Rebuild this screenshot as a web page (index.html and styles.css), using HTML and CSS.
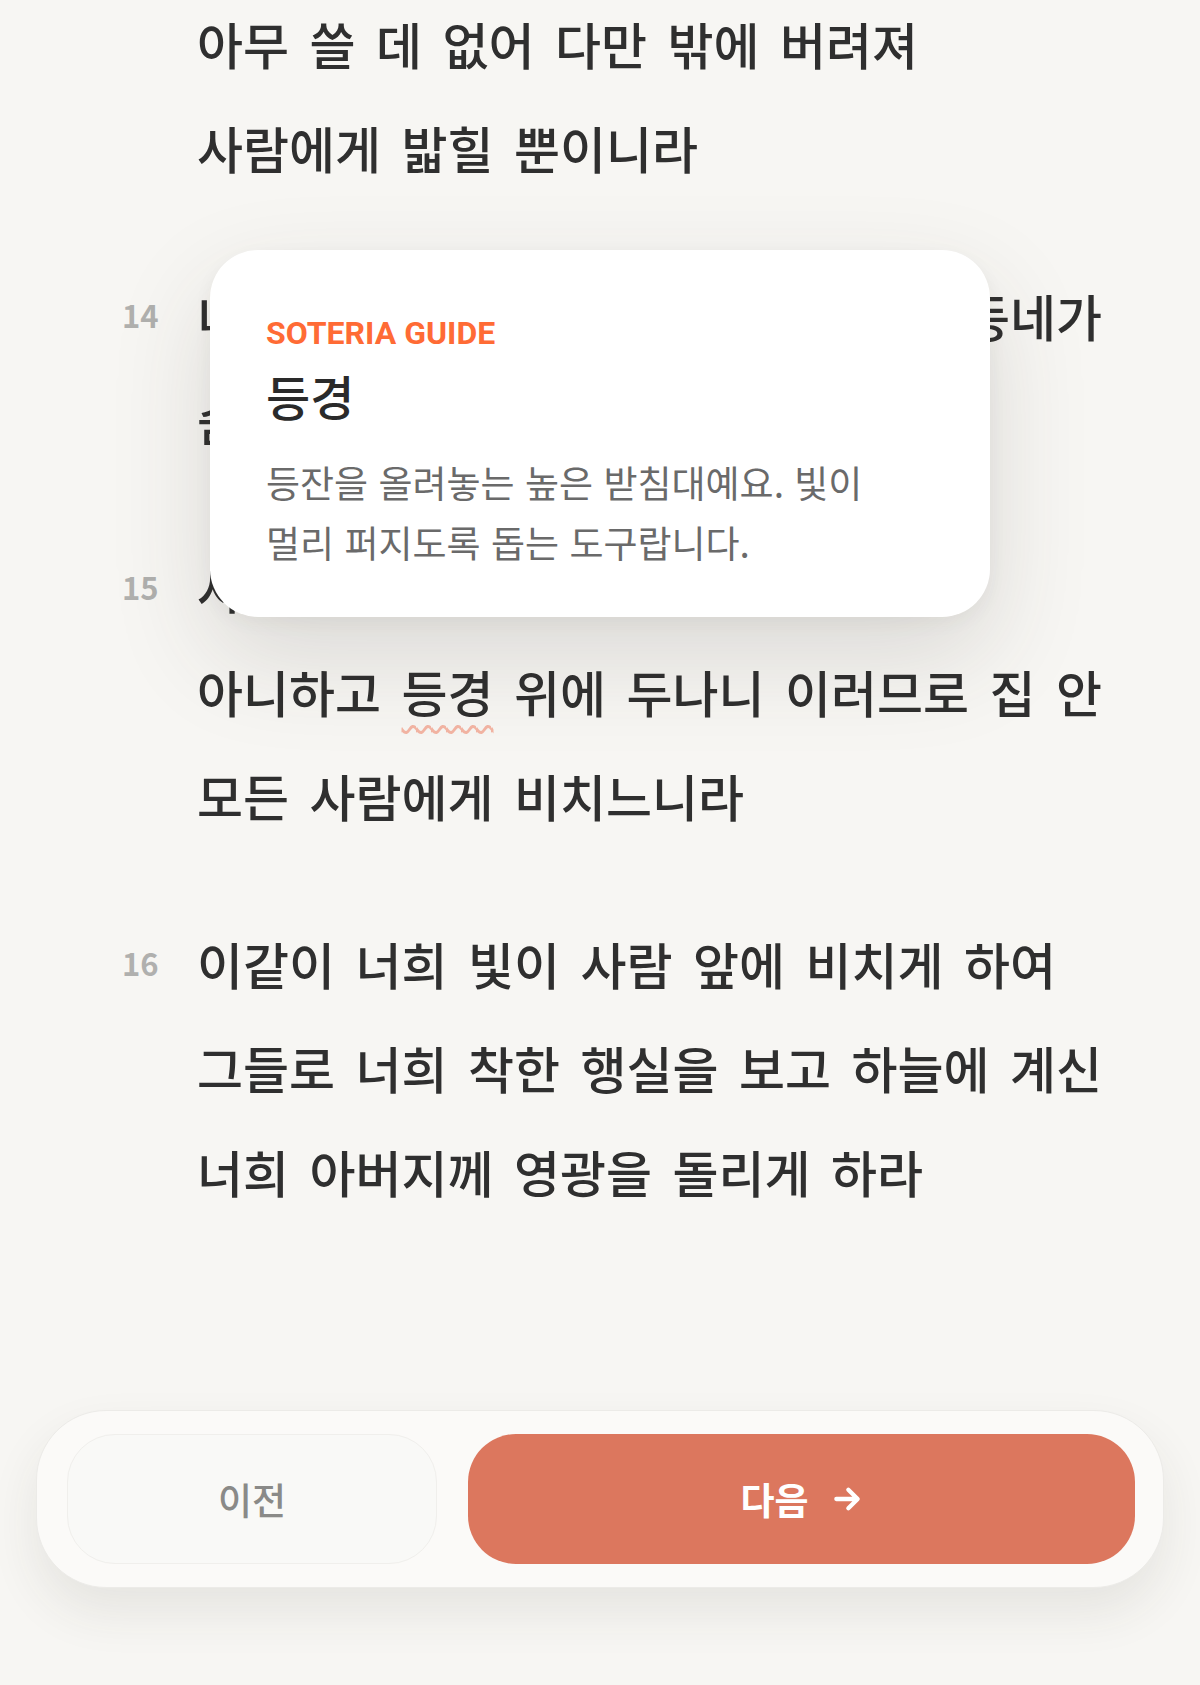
FILE: index.html
```html
<!DOCTYPE html>
<html lang="ko">
<head>
<meta charset="utf-8">
<title>마태복음 5장</title>
<link rel="stylesheet" href="styles.css">
</head>
<body>
<main class="reader">
  <section class="verse">
    <span class="verse-num"></span>
    <p class="verse-text">아무 쓸 데 없어 다만 밖에 버려져<br>사람에게 밟힐 뿐이니라</p>
  </section>
  <section class="verse">
    <span class="verse-num">14</span>
    <p class="verse-text">너희는 세상의 빛이라 산 위에 있는 동네가<br>숨겨지지 못할 것이요</p>
  </section>
  <section class="verse">
    <span class="verse-num">15</span>
    <p class="verse-text">사람이 등불을 켜서 말 아래에 두지<br>아니하고 <span class="term">등경</span> 위에 두나니 이러므로 집 안<br>모든 사람에게 비치느니라</p>
  </section>
  <section class="verse">
    <span class="verse-num">16</span>
    <p class="verse-text">이같이 너희 빛이 사람 앞에 비치게 하여<br>그들로 너희 착한 행실을 보고 하늘에 계신<br>너희 아버지께 영광을 돌리게 하라</p>
  </section>
</main>

<aside class="guide-card">
  <div class="guide-label">SOTERIA GUIDE</div>
  <h2 class="guide-title">등경</h2>
  <p class="guide-desc">등잔을 올려놓는 높은 받침대예요. 빛이 멀리 퍼지도록 돕는 도구랍니다.</p>
</aside>

<nav class="pager">
  <button class="pager-btn pager-prev" type="button">이전</button>
  <button class="pager-btn pager-next" type="button">다음
    <svg class="arrow" viewBox="0 0 24 24" width="32" height="32" aria-hidden="true"><path d="M4 12h15M13 5l7 7-7 7" fill="none" stroke="#fff" stroke-width="3.2" stroke-linecap="round" stroke-linejoin="round"/></svg>
  </button>
</nav>
</body>
</html>
```

FILE: styles.css
```css
* { box-sizing: border-box; }

html, body {
  margin: 0;
  padding: 0;
}

body {
  background: #f7f6f3;
  min-height: 100vh;
  display: flex;
  flex-direction: column;
  font-family: "Noto Sans CJK KR", "Noto Sans", sans-serif;
  color: #303030;
  position: relative;
  overflow: hidden;
}

.reader {
  flex: 1;
  margin-top: -9px;
  padding: 0 40px 0 122px;
}

.verse {
  display: grid;
  grid-template-columns: 75px 1fr;
  margin-bottom: 64px;
}

.verse-num {
  font-family: "Noto Sans CJK KR", "Noto Sans", sans-serif;
  font-size: 31px;
  font-weight: 600;
  line-height: 104px;
  color: #b0b0ae;
}

.verse-text {
  margin: 0;
  font-size: 50px;
  font-weight: 500;
  letter-spacing: 0;
  word-spacing: 6.5px;
  line-height: 104px;
  color: #2f2f2f;
  white-space: nowrap;
}

.term {
  text-decoration: underline wavy rgba(240, 138, 112, 0.6);
  text-decoration-thickness: 3px;
  text-underline-offset: 12px;
}

.guide-card {
  position: absolute;
  left: 210px;
  top: 250px;
  width: 780px;
  padding: 64px 56px 45px;
  background: #ffffff;
  border-radius: 48px;
  box-shadow: 0 40px 100px rgba(60, 55, 45, 0.15), 0 6px 18px rgba(60, 55, 45, 0.05);
}

.guide-label {
  font-family: Roboto, "Noto Sans", sans-serif;
  font-size: 32px;
  font-weight: 700;
  line-height: 38px;
  color: #ff6b35;
  margin-bottom: 12px;
}

.guide-title {
  margin: 0 0 26px;
  font-size: 48px;
  font-weight: 500;
  line-height: 62px;
  color: #2a2a2a;
}

.guide-desc {
  margin: 0;
  font-size: 37px;
  font-weight: 400;
  line-height: 60px;
  color: #6a6a6a;
  word-break: keep-all;
}

.pager {
  margin: 0 36px 97px;
  padding: 23px 28px 23px 30px;
  display: grid;
  grid-template-columns: 370px 1fr;
  gap: 31px;
  background: #fbfaf8;
  border: 1px solid #ecebe8;
  border-radius: 70px;
  box-shadow: 0 24px 50px rgba(60, 55, 45, 0.09);
}

.pager-btn {
  height: 130px;
  border-radius: 48px;
  font-family: "Noto Sans CJK KR", "Noto Sans", sans-serif;
  font-size: 37px;
  display: flex;
  align-items: center;
  justify-content: center;
  gap: 22px;
  cursor: pointer;
}

.pager-prev {
  background: #f9f9f7;
  border: 1px solid #f0efec;
  color: #8a8a88;
  font-weight: 500;
}

.pager-next {
  background: #dc775e;
  border: none;
  color: #ffffff;
  font-weight: 700;
}

.arrow {
  display: block;
}
```
